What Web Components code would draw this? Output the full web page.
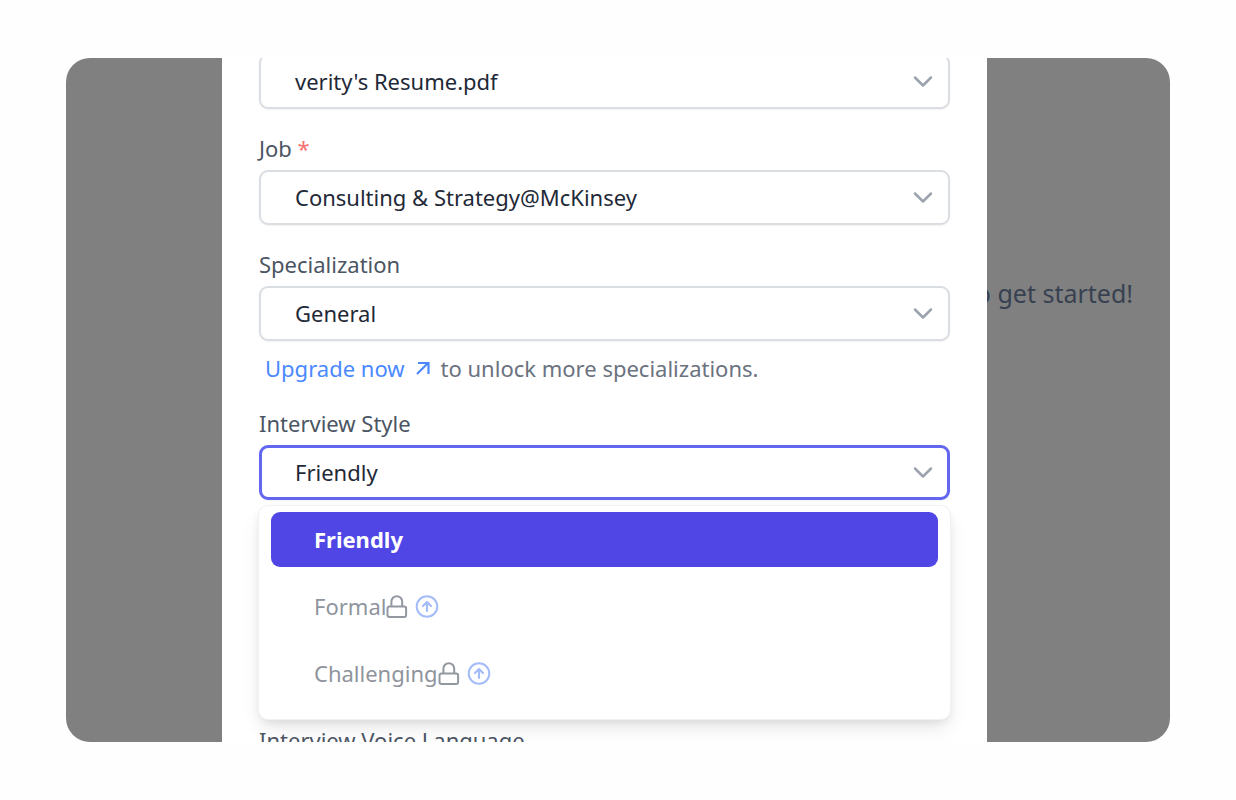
<!DOCTYPE html>
<html lang="en">
<head>
<meta charset="utf-8">
<meta name="viewport" content="width=device-width, initial-scale=1">
<title>Interview setup</title>
<style>
  body { margin: 0; background: #fefefe; font-family: "Noto Sans", "Open Sans", sans-serif; font-size: 22px; line-height: 30px; color: #1f2937; }
</style>
</head>
<body>
<app-stage>
  <span slot="page">to get started!</span>
  <setup-dialog>
    <select-field value="verity's Resume.pdf"></select-field>
    <select-field label="Job" required value="Consulting &amp; Strategy@McKinsey"></select-field>
    <select-field label="Specialization" value="General">
      <upgrade-hint>to unlock more specializations.</upgrade-hint>
    </select-field>
    <select-field label="Interview Style" value="Friendly" open>
      <option-menu>
        <menu-option selected>Friendly</menu-option>
        <menu-option locked>Formal</menu-option>
        <menu-option locked>Challenging</menu-option>
      </option-menu>
    </select-field>
    <select-field label="Interview Voice Language" value="English"></select-field>
  </setup-dialog>
</app-stage>

<script>
  const define = (name, render) => customElements.define(name, class extends HTMLElement {
    constructor() {
      super();
      this.attachShadow({ mode: 'open' });
    }
    connectedCallback() {
      this.shadowRoot.innerHTML = render(this);
    }
  });

  define('app-stage', () => `
    <style>
      :host { display: grid; box-sizing: border-box; height: 100vh; padding: 58px 66px; }
      main { display: grid; grid-template-columns: 156fr 765fr 183fr; grid-template-rows: minmax(0, 1fr);
             border-radius: 24px; overflow: hidden; background: #808080; }
      .page { grid-area: 1 / 1 / 2 / 4; justify-self: end; padding: 220px 37px 0 0;
              font-size: 25px; color: #374151; white-space: nowrap; }
      .dialog { grid-area: 1 / 2 / 2 / 3; position: relative; min-width: 0; overflow: hidden; background: #fff; }
    </style>
    <main>
      <div class="page"><slot name="page"></slot></div>
      <div class="dialog"><slot></slot></div>
    </main>`);

  define('setup-dialog', () => `
    <style>
      :host { display: block; margin-top: -4px; padding: 0 37px; }
      form { display: flex; flex-direction: column; gap: 24px; }
    </style>
    <form><slot></slot></form>`);

  define('select-field', el => {
    const label = el.getAttribute('label');
    return `
    <style>
      :host { display: block; }
      label { display: block; margin-bottom: 7px; color: #4b5563; }
      .star { color: #f87171; }
      .box { display: grid; align-items: center; }
      select { grid-area: 1 / 1; appearance: none; box-sizing: border-box; width: 100%; height: 55px; margin: 0;
               padding: 0 60px 2px 34px; border: 2px solid #dadde2; border-radius: 9px; background: #fff;
               box-shadow: 0 1px 2px rgba(0, 0, 0, .05); font: inherit; color: #1f2937; outline: none; }
      :host([open]) select { padding: 0 59px 2px 33px; border: 3px solid #6366f1; }
      svg { grid-area: 1 / 1; justify-self: end; margin-right: 17px; width: 21px; height: 21px; pointer-events: none; }
    </style>
    ${label ? `<label for="field">${label}${el.hasAttribute('required') ? ' <span class="star">*</span>' : ''}</label>` : ''}
    <div class="box">
      <select id="field" ${label ? '' : 'aria-label="Resume"'}><option>${el.getAttribute('value')}</option></select>
      <svg viewBox="0 0 21 21" fill="none" stroke="#9ca3af" stroke-width="2.5" stroke-linecap="round" stroke-linejoin="round" aria-hidden="true"><path d="M3 6.5l8 8 8-8"/></svg>
    </div>
    <slot></slot>`;
  });

  define('upgrade-hint', () => `
    <style>
      :host { display: flex; align-items: center; margin: 12px 0 1px; padding-left: 6px; color: #6b7280; white-space: nowrap; }
      a { display: flex; align-items: center; gap: 10px; margin-right: 10px; color: #4b89ff; text-decoration: none; }
      svg { width: 16px; height: 16px; }
    </style>
    <a href="#upgrade">Upgrade now
      <svg viewBox="0 0 16 16" fill="none" stroke="currentColor" stroke-width="2.2" aria-hidden="true"><path d="M2 14L13.5 2.5M3 3h10.5v11"/></svg>
    </a>
    <span><slot></slot></span>`);

  define('option-menu', () => `
    <style>
      :host { display: block; margin: 5px -1px -19px; }
      div { display: flex; flex-direction: column; gap: 12px; padding: 6px 12px 18px; border: 1px solid #f0f1f3;
            border-radius: 10px; background: #fff;
            box-shadow: 0 10px 20px -3px rgba(0, 0, 0, .1), 0 4px 8px -2px rgba(0, 0, 0, .08); }
    </style>
    <div role="listbox" aria-label="Interview Style"><slot></slot></div>`);

  define('menu-option', el => `
    <style>
      :host { display: block; }
      button { display: flex; align-items: center; width: 100%; height: 55px; margin: 0; padding: 0 43px 2px; border: 0;
               border-radius: 9px; background: none; font: inherit; color: #8f949d; text-align: left; }
      :host([selected]) button { background: #4f46e5; color: #fff; font-weight: 700; }
      svg { width: 24px; height: 24px; flex: none; }
      .lock { margin-left: -1px; }
      .up { margin-left: 6px; }
    </style>
    <button type="button" role="option" aria-selected="${el.hasAttribute('selected')}"><slot></slot>${el.hasAttribute('locked') ? `
      <svg class="lock" viewBox="0 0 24 24" fill="none" stroke="#9297a0" stroke-width="2" aria-hidden="true"><rect x="2.5" y="12.5" width="18.6" height="10.5" rx="2"/><path d="M6.4 12.5V7.6a5.4 5.4 0 0 1 10.8 0v4.9"/></svg>
      <svg class="up" viewBox="0 0 24 24" fill="none" stroke="#a5bcfb" stroke-width="2" stroke-linecap="round" stroke-linejoin="round" aria-hidden="true"><circle cx="12" cy="12.5" r="10.3"/><path stroke-width="2.2" d="M12 17V8.5M8 12l4-4 4 4"/></svg>` : ''}
    </button>`);
</script>
</body>
</html>
